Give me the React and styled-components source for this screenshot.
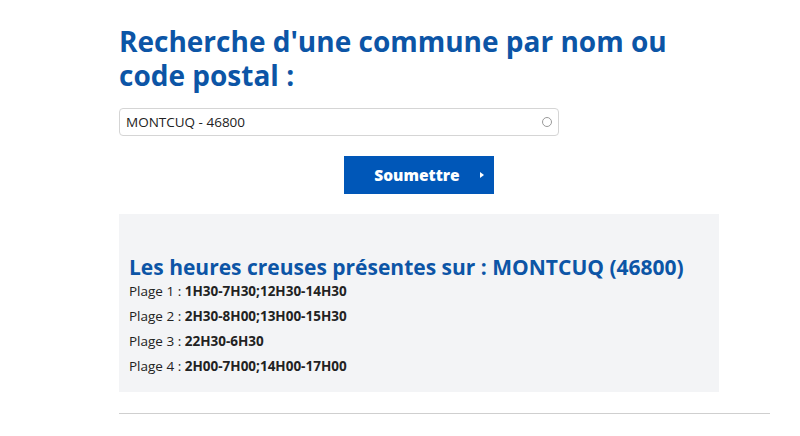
import React from "react";
import styled, { createGlobalStyle } from "styled-components";

const Global = createGlobalStyle`
  html, body { margin: 0; padding: 0; background: #fff; }
  body { font-family: "Open Sans", "Noto Sans", sans-serif; color: #222; }
`;

const Page = styled.div`
  width: 800px;
  height: 436px;
  overflow: hidden;
  padding: 24px 30px 0 119px;
  box-sizing: border-box;
`;

const Title = styled.h1`
  margin: 0;
  width: 580px;
  font-size: 28px;
  line-height: 34px;
  font-weight: 700;
  color: #0c55a6;
`;

const SearchField = styled.div`
  margin-top: 16px;
  width: 440px;
  height: 28px;
  box-sizing: border-box;
  border: 1px solid #d5d5d5;
  border-radius: 4px;
  display: flex;
  align-items: center;
  justify-content: space-between;
  padding: 0 6px 0 6px;
  font-size: 13.5px;
  color: #222;
`;

const Spinner = styled.span`
  width: 8px;
  height: 8px;
  border: 1.5px solid #9a9a9a;
  border-radius: 50%;
`;

const ButtonRow = styled.div`
  width: 600px;
  display: flex;
  justify-content: center;
  margin-top: 20px;
`;

const SubmitButton = styled.button`
  width: 150px;
  height: 38px;
  border: none;
  background: #0057b8;
  color: #fff;
  font-family: inherit;
  font-weight: 800;
  font-size: 15.5px;
  display: flex;
  align-items: center;
  justify-content: center;
  gap: 20px;
  padding: 0 0 0 20px;
`;

const Arrow = styled.span`
  width: 0;
  height: 0;
  border-top: 3.5px solid transparent;
  border-bottom: 3.5px solid transparent;
  border-left: 4px solid #fff;
`;

const ResultBox = styled.section`
  margin-top: 20px;
  width: 600px;
  height: 178px;
  box-sizing: border-box;
  background: #f3f4f6;
  padding: 41px 10px 0 10px;
`;

const ResultTitle = styled.h2`
  margin: 0 0 3px 0;
  font-size: 21px;
  line-height: 24px;
  font-weight: 700;
  color: #0c55a6;
`;

const Slot = styled.p`
  margin: 0 0 7px 0;
  font-size: 13.5px;
  line-height: 18px;
  color: #222;
  & b { font-weight: 700; }
`;

const Rule = styled.hr`
  margin: 21px 0 0 0;
  width: 651px;
  border: none;
  border-top: 1px solid #cfcfcf;
`;

const slots = [
  "1H30-7H30;12H30-14H30",
  "2H30-8H00;13H00-15H30",
  "22H30-6H30",
  "2H00-7H00;14H00-17H00",
];

export default function App() {
  return (
    <>
      <Global />
      <Page>
        <Title>Recherche d'une commune par nom ou code postal :</Title>
        <SearchField>
          <span>MONTCUQ - 46800</span>
          <Spinner />
        </SearchField>
        <ButtonRow>
          <SubmitButton>
            Soumettre <Arrow />
          </SubmitButton>
        </ButtonRow>
        <ResultBox>
          <ResultTitle>Les heures creuses présentes sur : MONTCUQ (46800)</ResultTitle>
          {slots.map((s, i) => (
            <Slot key={i}>
              Plage {i + 1} : <b>{s}</b>
            </Slot>
          ))}
        </ResultBox>
        <Rule />
      </Page>
    </>
  );
}
